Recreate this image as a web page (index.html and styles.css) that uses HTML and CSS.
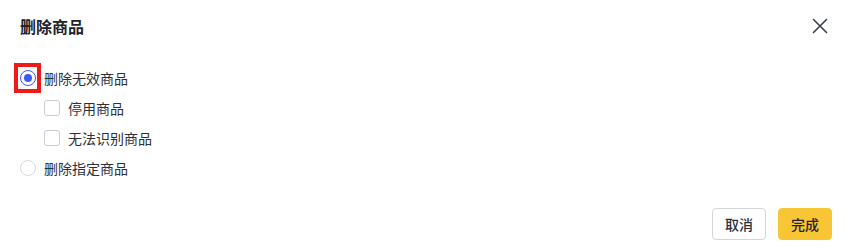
FILE: index.html
```html
<!DOCTYPE html>
<html lang="zh-CN">
<head>
<meta charset="utf-8">
<title>删除商品</title>
<link rel="stylesheet" href="styles.css">
</head>
<body>
<div class="dialog">
  <div class="header">
    <div class="title">删除商品</div>
    <button class="close" aria-label="关闭">
      <svg width="20" height="20" viewBox="0 0 20 20"><path d="M3.5 3.5 L16.5 16.5 M16.5 3.5 L3.5 16.5" stroke="#3a3f4b" stroke-width="1.6" stroke-linecap="round" fill="none"/></svg>
    </button>
  </div>
  <div class="body">
    <label class="row">
      <span class="radio-wrap"><span class="radio checked"></span><span class="highlight"></span></span>
      <span class="label">删除无效商品</span>
    </label>
    <label class="row sub">
      <span class="checkbox"></span>
      <span class="label">停用商品</span>
    </label>
    <label class="row sub">
      <span class="checkbox"></span>
      <span class="label">无法识别商品</span>
    </label>
    <label class="row">
      <span class="radio-wrap"><span class="radio"></span></span>
      <span class="label">删除指定商品</span>
    </label>
  </div>
  <div class="footer">
    <button class="btn btn-default">取消</button>
    <button class="btn btn-primary">完成</button>
  </div>
</div>
</body>
</html>
```
FILE: styles.css
```css
* { box-sizing: border-box; }
html, body { margin: 0; padding: 0; background: #fff; }
body {
  font-family: "Noto Sans CJK SC", "Noto Sans", sans-serif;
  color: #1f2329;
  width: 852px;
  height: 252px;
  overflow: hidden;
}
.dialog {
  width: 852px;
  height: 252px;
  display: flex;
  flex-direction: column;
}
.header {
  display: flex;
  justify-content: space-between;
  align-items: flex-start;
  height: 40px;
  padding: 14px 22px 0 20px;
}
.title {
  font-size: 16px;
  line-height: 24px;
  font-weight: 700;
  color: #1f2329;
}
.close {
  width: 20px;
  height: 20px;
  padding: 0;
  margin-top: 2px;
  border: none;
  background: none;
  display: flex;
}
.body {
  padding: 27px 20px 0 20px;
  display: flex;
  flex-direction: column;
  gap: 8px;
}
.row {
  display: flex;
  align-items: center;
  gap: 8px;
  height: 22px;
  font-size: 14px;
  color: #2c3038;
}
.row.sub { padding-left: 24px; }
.label { line-height: 22px; }
.radio-wrap {
  position: relative;
  width: 16px;
  height: 16px;
  display: flex;
}
.radio {
  width: 16px;
  height: 16px;
  border-radius: 50%;
  border: 1px solid #d5d8df;
  background: #fff;
  display: flex;
  align-items: center;
  justify-content: center;
}
.radio.checked { border-color: #3e5bf6; }
.radio.checked::after {
  content: "";
  width: 8px;
  height: 8px;
  border-radius: 50%;
  background: #3e5bf6;
}
.highlight {
  position: absolute;
  left: -6px;
  top: -7px;
  width: 27px;
  height: 30px;
  border: 4px solid #ee1a1a;
}
.checkbox {
  width: 16px;
  height: 16px;
  border: 1px solid #c9ccd5;
  border-radius: 3px;
  background: #fff;
}
.footer {
  margin-top: auto;
  display: flex;
  justify-content: flex-end;
  gap: 12px;
  padding: 0 20px 12px 20px;
}
.btn {
  width: 54px;
  height: 32px;
  border-radius: 4px;
  font-family: inherit;
  font-size: 14px;
  font-weight: 500;
  padding: 0;
  display: flex;
  align-items: center;
  justify-content: center;
}
.btn-default {
  background: #fff;
  border: 1px solid #d3d6df;
  color: #2b2f36;
}
.btn-primary {
  background: #f8c634;
  border: 1px solid #f8c634;
  color: #1f2329;
}
```
